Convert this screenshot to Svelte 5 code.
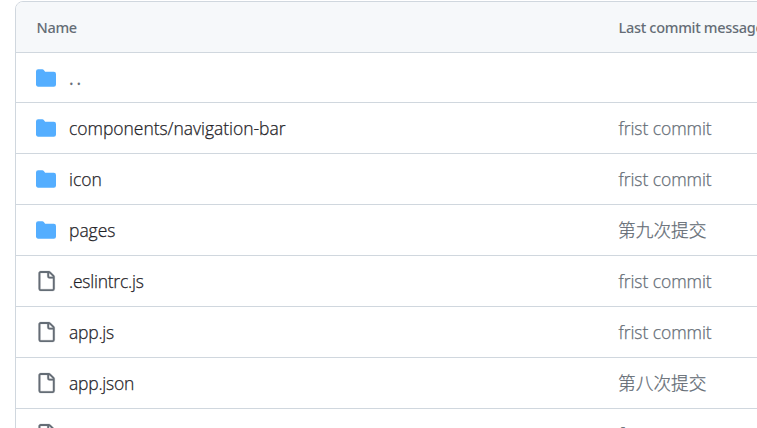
<script lang="ts">
	type Entry = {
		name: string;
		type: 'up' | 'dir' | 'file';
		message: string;
	};

	const entries: Entry[] = [
		{ name: '..', type: 'up', message: '' },
		{ name: 'components/navigation-bar', type: 'dir', message: 'frist commit' },
		{ name: 'icon', type: 'dir', message: 'frist commit' },
		{ name: 'pages', type: 'dir', message: '第九次提交' },
		{ name: '.eslintrc.js', type: 'file', message: 'frist commit' },
		{ name: 'app.js', type: 'file', message: 'frist commit' },
		{ name: 'app.json', type: 'file', message: '第八次提交' },
		{ name: 'app.wxss', type: 'file', message: 'frist commit' }
	];
</script>

<main class="viewport">
	<div class="file-table">
		<div class="row header">
			<div class="name-cell">Name</div>
			<div class="message-cell">Last commit message</div>
		</div>

		{#each entries as entry}
			<div class="row {entry.type}">
				<div class="name-cell">
					{#if entry.type === 'file'}
						<svg class="icon" viewBox="0 0 16 16" aria-hidden="true">
							<path d="M2 1.75C2 .784 2.784 0 3.75 0h6.586c.464 0 .909.184 1.237.513l2.914 2.914c.329.328.513.773.513 1.237v9.586A1.75 1.75 0 0 1 13.25 16h-9.5A1.75 1.75 0 0 1 2 14.25Zm1.75-.25a.25.25 0 0 0-.25.25v12.5c0 .138.112.25.25.25h9.5a.25.25 0 0 0 .25-.25V6h-2.75A1.75 1.75 0 0 1 9 4.25V1.5Zm6.75.062V4.25c0 .138.112.25.25.25h2.688l-.011-.013-2.914-2.914-.013-.011Z" />
						</svg>
					{:else}
						<svg class="icon folder" viewBox="0 0 16 16" aria-hidden="true">
							<path d="M1.75 1A1.75 1.75 0 0 0 0 2.75v10.5C0 14.216.784 15 1.75 15h12.5A1.75 1.75 0 0 0 16 13.25v-8.5A1.75 1.75 0 0 0 14.25 3H7.5a.25.25 0 0 1-.2-.1l-.9-1.2C6.07 1.26 5.55 1 5 1H1.75Z" />
						</svg>
					{/if}
					<span class="name">{entry.name}</span>
				</div>
				<div class="message-cell" class:cjk={/[\u4e00-\u9fff]/.test(entry.message)}>{entry.message}</div>
			</div>
		{/each}
	</div>
</main>

<style>
	:global(body) {
		background: #ffffff;
	}

	.viewport {
		box-sizing: border-box;
		width: 757px;
		height: 428px;
		padding: 1px 0 0 15px;
		overflow: hidden;
		font-family: 'Open Sans', 'Noto Sans CJK SC', sans-serif;
	}

	.file-table {
		width: 1000px;
		border: 1px solid #d0d7de;
		border-radius: 8px;
		overflow: hidden;
	}

	.row {
		display: grid;
		grid-template-columns: 582px 1fr;
		align-items: center;
		box-sizing: border-box;
		height: 51px;
		padding-left: 20px;
		border-bottom: 1px solid #d0d7de;
		color: #1f2328;
		font-size: 17.5px;
		font-weight: 300;
		line-height: 26px;
		white-space: nowrap;
		-webkit-text-stroke: 0.25px currentColor;
	}

	.header {
		padding-left: 20.5px;
		background: #f6f8fa;
		color: #656d76;
		font-family: 'Noto Sans', 'Open Sans', sans-serif;
		font-size: 14.5px;
		font-weight: 500;
		letter-spacing: -0.31px;
		-webkit-text-stroke: 0;
	}

	.up {
		height: 50px;
	}

	.name-cell {
		display: flex;
		align-items: center;
	}

	.icon {
		flex: none;
		width: 20px;
		height: 20px;
		margin-right: 13px;
		fill: #656d76;
		overflow: visible;
	}

	.file .icon {
		stroke: #656d76;
		stroke-width: 0.15;
	}

	.folder {
		fill: #54aeff;
	}

	.name {
		letter-spacing: -0.04px;
	}

	.file .name {
		letter-spacing: -0.24px;
	}

	.up .name {
		color: #656d76;
		font-weight: 500;
		letter-spacing: 2.8px;
	}

	.row .message-cell {
		color: #656d76;
	}

	.row:not(.header) .message-cell {
		padding-left: 0.5px;
		letter-spacing: -0.06px;
	}

	.row:not(.header) .cjk {
		padding-left: 0;
		font-size: 17.7px;
		letter-spacing: 0;
	}
</style>
